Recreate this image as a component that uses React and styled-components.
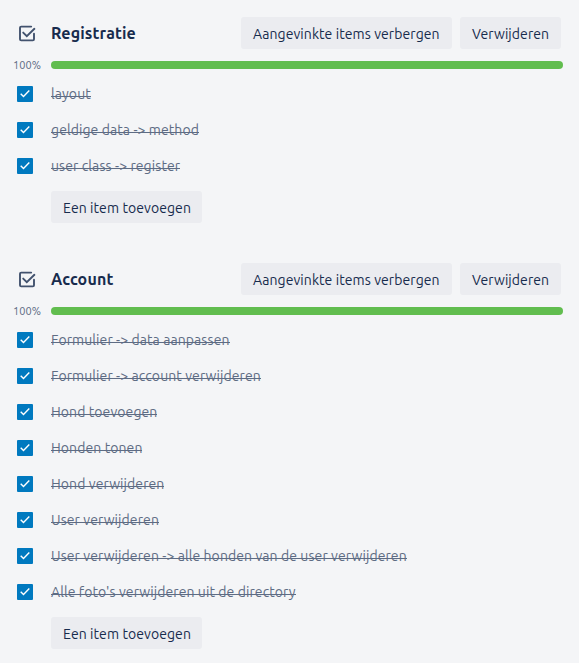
import React from 'react';
import styled, { createGlobalStyle } from 'styled-components';

const GlobalStyle = createGlobalStyle`
  * { box-sizing: border-box; }
  body {
    margin: 0;
    background: #f4f5f7;
    color: #172b4d;
    font: 14px/20px Ubuntu, "Noto Sans", sans-serif;
    letter-spacing: 0.08px;
  }
`;

const Page = styled.main`
  display: flex;
  flex-direction: column;
  gap: 40px;
  width: 579px;
  height: 663px;
  padding-top: 17px;
  overflow: hidden;
`;

const Section = styled.section`
  display: flex;
  flex-direction: column;
`;

const Header = styled.header`
  display: flex;
  align-items: center;
  height: 32px;
  padding: 0 18px 0 17px;
`;

const HeaderIcon = styled.svg`
  flex: none;
  width: 20px;
  height: 20px;
  margin-right: 14px;
`;

const Title = styled.h3`
  flex: 1;
  margin: 0;
  font-size: 16px;
  font-weight: 700;
  line-height: 20px;
  letter-spacing: 0.14px;
`;

const Actions = styled.div`
  display: flex;
  gap: 8px;
`;

const Button = styled.button`
  width: ${(p) => p.$width}px;
  height: 32px;
  padding: 2px 0 0 12px;
  border: 0;
  border-radius: 3px;
  background: #ebecf0;
  color: #172b4d;
  font: inherit;
  letter-spacing: inherit;
  text-align: left;
  white-space: nowrap;
`;

const Progress = styled.div`
  display: flex;
  align-items: center;
  height: 8px;
  margin: 12px 16px 0 13px;
`;

const Percentage = styled.span`
  width: 38px;
  color: #5e6c84;
  font-size: 11px;
  line-height: 10px;
`;

const Track = styled.div`
  flex: 1;
  height: 8px;
  overflow: hidden;
  border-radius: 4px;
  background: #dfe1e6;
`;

const Fill = styled.div`
  width: 100%;
  height: 100%;
  background: #61bd4f;
`;

const Items = styled.ul`
  margin: 7px 0 0;
  padding: 0;
  list-style: none;
`;

const Item = styled.li`
  display: flex;
  align-items: center;
  height: 36px;
  padding-left: 17px;
`;

const Checkbox = styled.span`
  display: flex;
  flex: none;
  width: 16px;
  height: 16px;
  margin-right: 18px;
  border-radius: 1px;
  background: #0079bf;
`;

/* The strike sits just below the hyphens so that arrows stay readable. */
const ItemText = styled.s`
  color: #5e6c84;
  white-space: nowrap;
  letter-spacing: 0.085px;
  text-decoration: none;
  background: linear-gradient(#5e6c84, #5e6c84) 0 12px / 100% 1px no-repeat;
`;

const Footer = styled.footer`
  padding: 7px 0 0 51px;
`;

const checklists = [
  {
    title: 'Registratie',
    items: ['layout', 'geldige data -> method', 'user class -> register'],
  },
  {
    title: 'Account',
    items: [
      'Formulier -> data aanpassen',
      'Formulier -> account verwijderen',
      'Hond toevoegen',
      'Honden tonen',
      'Hond verwijderen',
      'User verwijderen',
      'User verwijderen -> alle honden van de user verwijderen',
      "Alle foto's verwijderen uit de directory",
    ],
  },
];

function ChecklistIcon() {
  return (
    <HeaderIcon viewBox="0 0 20 20" fill="none" stroke="#42526e" strokeWidth="1.9" strokeLinecap="round">
      <path d="M14.2 3.6H4.2A1.2 1.2 0 0 0 3 4.8v11.4a1.2 1.2 0 0 0 1.2 1.2h11.6a1.2 1.2 0 0 0 1.2-1.2v-5.4" />
      <path d="M6.2 9.6l3.6 3.6 7.6-7.4" />
    </HeaderIcon>
  );
}

function Checkmark() {
  return (
    <svg width="16" height="16" viewBox="0 0 16 16" fill="none" stroke="#fff" strokeWidth="1.4">
      <path d="M3.7 7.7l2.8 2.8 5.8-5.9" />
    </svg>
  );
}

function Checklist({ title, items }) {
  return (
    <Section>
      <Header>
        <ChecklistIcon />
        <Title>{title}</Title>
        <Actions>
          <Button $width={211}>Aangevinkte items verbergen</Button>
          <Button $width={101}>Verwijderen</Button>
        </Actions>
      </Header>
      <Progress>
        <Percentage>100%</Percentage>
        <Track><Fill /></Track>
      </Progress>
      <Items>
        {items.map((text) => (
          <Item key={text}>
            <Checkbox><Checkmark /></Checkbox>
            <ItemText>{text}</ItemText>
          </Item>
        ))}
      </Items>
      <Footer>
        <Button $width={151}>Een item toevoegen</Button>
      </Footer>
    </Section>
  );
}

export default function App() {
  return (
    <>
      <GlobalStyle />
      <Page>
        {checklists.map((list) => <Checklist key={list.title} {...list} />)}
      </Page>
    </>
  );
}
